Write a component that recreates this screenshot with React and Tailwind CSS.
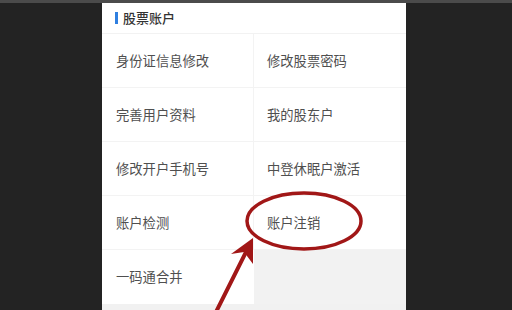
import { Fragment } from 'react'

const rows = [
  ['身份证信息修改', '修改股票密码'],
  ['完善用户资料', '我的股东户'],
  ['修改开户手机号', '中登休眠户激活'],
  ['账户检测', '账户注销'],
]

export default function App() {
  return (
    <div
      className="relative w-[512px] h-[310px] overflow-hidden bg-[#232323]"
      style={{ fontFamily: '"Noto Sans CJK SC", "Noto Sans", sans-serif' }}
    >
      <div className="h-[3px] bg-[#4b4b4b]" />

      <div className="ml-[102px] w-[304px] h-[307px] bg-[#f1f1f1]">
        {/* section header */}
        <div className="h-[31px] flex items-center pl-[13px] bg-white border-b border-[#f2f2f2]">
          <span className="w-[3px] h-[12px] bg-[#2f7fe0] mr-[5px]" />
          <span className="text-[13px] font-medium text-[#333]">股票账户</span>
        </div>

        <div className="grid grid-cols-2">
          {rows.map(([a, b]) => (
            <Fragment key={a}>
              <div className="h-[54px] flex items-center pl-[14px] bg-white border-b border-r border-[#f3f3f3] text-[13.3px] text-[#4f4f4f]">
                {a}
              </div>
              <div className="h-[54px] flex items-center pl-[13px] bg-white border-b border-[#f3f3f3] text-[13.3px] text-[#4f4f4f]">
                {b}
              </div>
            </Fragment>
          ))}
          <div className="h-[54px] flex items-center pl-[14px] bg-white text-[13.3px] text-[#4f4f4f]">
            一码通合并
          </div>
          <div className="h-[54px] bg-[#f2f2f2]" />
        </div>
      </div>

      {/* red annotation */}
      <svg className="absolute inset-0" width="512" height="310" viewBox="0 0 512 310">
        <ellipse cx="304" cy="221" rx="57" ry="28" fill="none" stroke="#a11717" strokeWidth="3.5" />
        <line x1="215" y1="314" x2="247" y2="250" stroke="#a11717" strokeWidth="4" strokeLinecap="round" />
        <polygon points="253,238 231,254 244,252 253,264" fill="#a11717" />
      </svg>
    </div>
  )
}
